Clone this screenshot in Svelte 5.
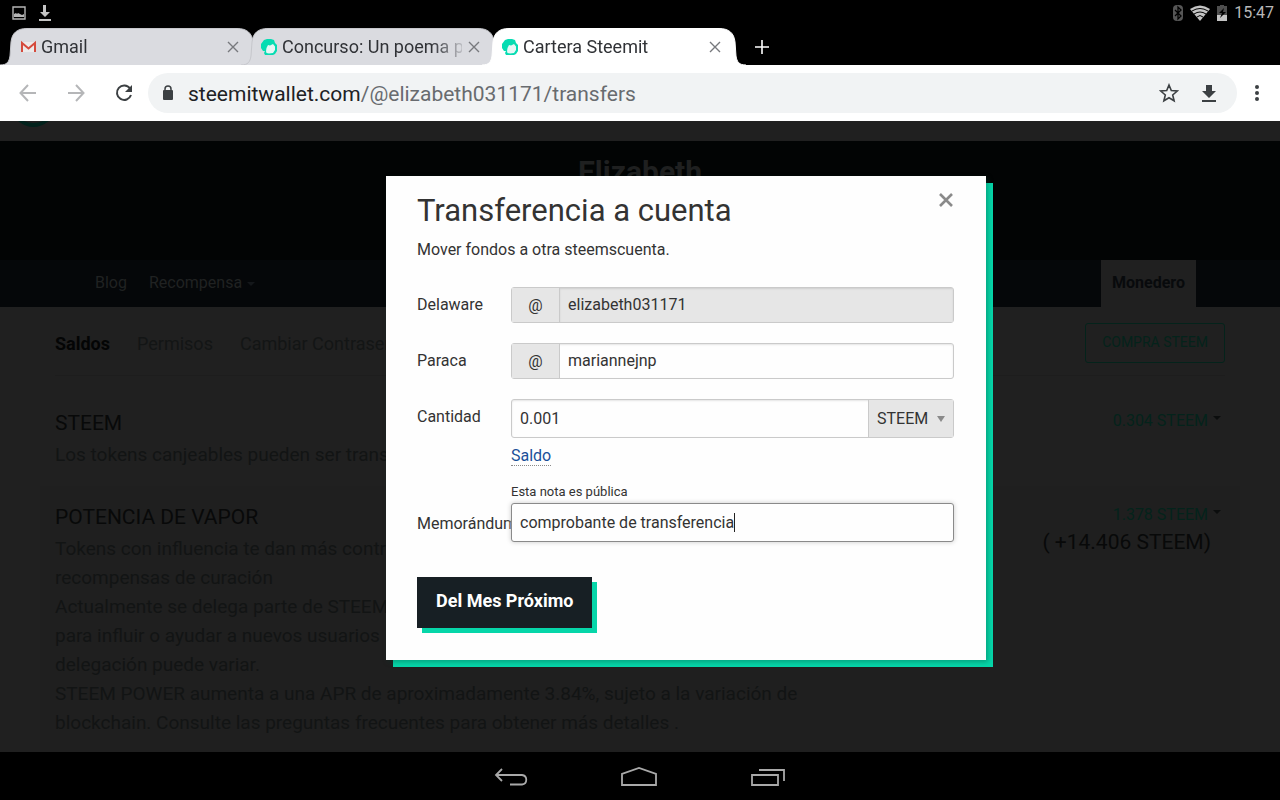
<script lang="ts">
  interface Tab {
    title: string;
    icon: 'gmail' | 'steem';
    active?: boolean;
  }

  const tabs: Tab[] = [
    { title: 'Gmail', icon: 'gmail' },
    { title: 'Concurso: Un poema p', icon: 'steem' },
    { title: 'Cartera Steemit', icon: 'steem', active: true }
  ];

  const powerLines = [
    'Tokens con influencia te dan más control',
    'recompensas de curación',
    'Actualmente se delega parte de STEEM',
    'para influir o ayudar a nuevos usuarios',
    'delegación puede variar.',
    'STEEM POWER aumenta a una APR de aproximadamente 3.84%, sujeto a la variación de',
    'blockchain. Consulte las preguntas frecuentes para obtener más detalles .'
  ];

  let from = $state('elizabeth031171');
  let to = $state('mariannejnp');
  let amount = $state('0.001');
  let asset = $state('STEEM');
  let memo = $state('comprobante de transferencia');
</script>

{#snippet cross()}
  <svg width="12" height="12" viewBox="0 0 12 12" aria-hidden="true">
    <path d="M1 1l10 10M11 1L1 11" fill="none" stroke="currentColor" stroke-width="1.4" />
  </svg>
{/snippet}

{#snippet favicon(kind: Tab['icon'])}
  {#if kind === 'gmail'}
    <svg width="16" height="16" viewBox="0 0 16 16" aria-hidden="true">
      <path d="M2 3h13v10H2z" fill="#eceaea" />
      <path d="M2 13V4l6.500 5.500L15 4v9" fill="none" stroke="#d54b3d" stroke-width="2" />
    </svg>
  {:else}
    <!-- speech bubble with a ring cut out of its lower right -->
    <svg width="16" height="16" viewBox="0 0 16 16" aria-hidden="true">
      <path d="M3 1L6 0h4l3 1 1 3 2 2v6l-2 3-2 1H4l-1-2 1-2H2L0 9V5z" fill="#06dcb2" />
      <path d="M7 6l2 .5L12 5l2 2.500v3.500L12 14l-4 .5L5.500 14 5 12l.5-3z" fill="#e6f7f5" />
    </svg>
  {/if}
{/snippet}

<div class="device">
  <div class="status-bar">
    <div class="status-group">
      <svg width="14" height="14" viewBox="0 0 14 14" aria-hidden="true">
        <path d="M1 1h12v12H1z" fill="none" stroke="#b5b5b5" stroke-width="1.4" />
        <path d="M2 11V8l2-1 1 1 1-1 2 1 2 1 2-1v3z" fill="#b5b5b5" />
      </svg>
      <svg width="14" height="18" viewBox="0 0 14 18" aria-hidden="true">
        <path d="M5 1h3v7h4l-5 5-5-5h3z" fill="#c4c4c4" />
        <path d="M1 15h12v2H1z" fill="#c4c4c4" />
      </svg>
    </div>
    <div class="status-group right">
      <svg width="12" height="18" viewBox="0 0 12 18" aria-hidden="true">
        <rect x="1" y="1" width="10" height="16" rx="4" fill="#565656" />
        <path d="M3 6l6 6-3 3V3l3 3-6 6" fill="none" stroke="#000" stroke-width="1.3" />
      </svg>
      <svg width="20" height="16" viewBox="0 0 20 16" aria-hidden="true">
        <path d="M0 4Q10-3 20 4L10 16z" fill="#c4c4c4" />
        <path d="M2 6q8-5 16 0M4 9q6-4 12 0M7 12q3-3 6 0" fill="none" stroke="#000" stroke-width="1" />
      </svg>
      <svg width="12" height="16" viewBox="0 0 12 16" aria-hidden="true">
        <path d="M4 0h4v1h3v9H1V1h3z" fill="#4e4e4e" />
        <path d="M1 10h10v6H1z" fill="#c4c4c4" />
        <path d="M8 3L3 8h3l-2 5 6-6H7z" fill="#000" />
      </svg>
      <time>15:47</time>
    </div>
  </div>

  <div class="tab-strip">
    {#each tabs as tab (tab.title)}
      <div class="tab" class:active={tab.active}>
        <svg class="tab-shape" viewBox="0 0 264 37" preserveAspectRatio="none" aria-hidden="true">
          <path d="M0 37C7 37 9 34 10 28L11 14C12 5 17 .5 27 .5H237C247 .5 252 5 253 14L254 28C255 34 257 37 264 37" />
        </svg>
        {@render favicon(tab.icon)}
        <span class="tab-title">{tab.title}</span>
        <button type="button" class="tab-close" aria-label="Cerrar {tab.title}">{@render cross()}</button>
      </div>
    {/each}
    <button type="button" class="new-tab" aria-label="Nueva pestaña">
      <svg width="14" height="14" viewBox="0 0 14 14" aria-hidden="true">
        <path d="M7 0v14M0 7h14" stroke="#fff" stroke-width="1.600" />
      </svg>
    </button>
  </div>

  <div class="toolbar">
    <button type="button" class="tool dim" aria-label="Atrás">
      <svg width="18" height="18" viewBox="0 0 18 18" aria-hidden="true">
        <path d="M17 9H2M9 1L1.500 9 9 17" fill="none" stroke="currentColor" stroke-width="2" />
      </svg>
    </button>
    <button type="button" class="tool dim" aria-label="Adelante">
      <svg width="18" height="18" viewBox="0 0 18 18" aria-hidden="true">
        <path d="M1 9h15M9 1l7.500 8L9 17" fill="none" stroke="currentColor" stroke-width="2" />
      </svg>
    </button>
    <button type="button" class="tool" aria-label="Recargar">
      <svg width="18" height="18" viewBox="0 0 18 18" aria-hidden="true">
        <path d="M15 4.500A7.200 7.200 0 1 0 16 11" fill="none" stroke="currentColor" stroke-width="2" />
        <path d="M17 1v7h-7z" fill="currentColor" />
      </svg>
    </button>
    <div class="omnibox">
      <svg width="12" height="16" viewBox="0 0 12 16" aria-hidden="true">
        <rect x="1" y="5" width="10" height="10" rx="1" fill="#3c4043" />
        <path d="M3 6V4a3 3 0 0 1 6 0v2" fill="none" stroke="#3c4043" stroke-width="1.500" />
      </svg>
      <span class="url"><b>steemitwallet.com</b>/@elizabeth031171/transfers</span>
      <button type="button" class="tool" aria-label="Añadir a marcadores">
        <svg width="20" height="20" viewBox="0 0 20 20" aria-hidden="true">
          <path d="M10 2l2.300 5.500 6 .5-4.600 4 1.400 5.800L10 14.700l-5.100 3.100L6.300 12 1.700 8l6-.5z" fill="none" stroke="currentColor" stroke-width="1.600" />
        </svg>
      </button>
      <button type="button" class="tool" aria-label="Descargar página">
        <svg width="14" height="18" viewBox="0 0 14 18" aria-hidden="true">
          <path d="M4 1h6v6h4l-7 7-7-7h4zM0 16h14v2H0z" fill="currentColor" />
        </svg>
      </button>
    </div>
    <button type="button" class="tool menu" aria-label="Más opciones">
      <svg width="4" height="16" viewBox="0 0 4 16" aria-hidden="true">
        <g fill="currentColor"><circle cx="2" cy="2" r="2" /><circle cx="2" cy="8" r="2" /><circle cx="2" cy="14" r="2" /></g>
      </svg>
    </button>
  </div>

  <div class="viewport">
    <header class="site-header">
      <svg width="40" height="8" viewBox="0 0 40 8" aria-hidden="true">
        <path d="M4 0Q19 12 35 0H29Q19 4 10 0z" fill="#02221c" />
      </svg>
    </header>
    <div class="banner"><h1>Elizabeth</h1></div>
    <nav class="profile-nav">
      <a href="#blog">Blog</a>
      <a href="#recompensa">Recompensa <i class="caret"></i></a>
      <a href="#monedero" class="current">Monedero</a>
    </nav>
    <div class="wallet">
      <div class="wallet-menu">
        <a href="#saldos" class="current">Saldos</a>
        <a href="#permisos">Permisos</a>
        <a href="#contrasena">Cambiar Contraseña</a>
        <button type="button" class="buy">COMPRA STEEM</button>
      </div>
      <section class="balance">
        <div class="balance-text">
          <h2>STEEM</h2>
          <p>Los tokens canjeables pueden ser transferidos</p>
        </div>
        <div class="balance-value"><a href="#steem">0.304 STEEM <i class="caret"></i></a></div>
      </section>
      <section class="balance shaded">
        <div class="balance-text">
          <h2>POTENCIA DE VAPOR</h2>
          {#each powerLines as line (line)}
            <p>{line}</p>
          {/each}
        </div>
        <div class="balance-value">
          <a href="#power">1.378 STEEM <i class="caret"></i></a>
          <div class="delegated">( +14.406 STEEM)</div>
        </div>
      </section>
    </div>

    <div class="overlay">
      <form class="dialog" role="dialog" aria-labelledby="transfer-title" onsubmit={(ev) => ev.preventDefault()}>
        <div class="dialog-head">
          <h3 id="transfer-title">Transferencia a cuenta</h3>
          <button type="button" class="close" aria-label="Cerrar">
            <svg width="14" height="14" viewBox="0 0 14 14" aria-hidden="true">
              <path d="M1 1l12 12M13 1L1 13" fill="none" stroke="currentColor" stroke-width="2.600" />
            </svg>
          </button>
        </div>
        <p class="lead">Mover fondos a otra steemscuenta.</p>

        <div class="row">
          <label for="from">Delaware</label>
          <div class="group">
            <span class="prefix">@</span>
            <input id="from" type="text" disabled bind:value={from} />
          </div>
        </div>
        <div class="row">
          <label for="to">Paraca</label>
          <div class="group">
            <span class="prefix">@</span>
            <input id="to" type="text" bind:value={to} />
          </div>
        </div>
        <div class="row">
          <label for="amount">Cantidad</label>
          <div>
            <div class="group tall">
              <input id="amount" type="text" bind:value={amount} />
              <div class="asset">
                <select aria-label="Moneda" bind:value={asset}>
                  <option>STEEM</option>
                  <option>SBD</option>
                </select>
                <svg width="8" height="6" viewBox="0 0 8 6" aria-hidden="true"><path d="M0 0h8L4 6z" fill="#8a8a8a" /></svg>
              </div>
            </div>
            <a class="use-balance" href="#saldo">Saldo</a>
          </div>
        </div>
        <small class="note">Esta nota es pública</small>
        <div class="row memo">
          <label for="memo">Memorándum</label>
          <div class="group tall focused">
            <input id="memo" type="text" bind:value={memo} />
            <span class="text-cursor"></span>
          </div>
        </div>
        <button type="submit" class="submit">Del Mes Próximo</button>
      </form>
    </div>
  </div>

  <div class="nav-bar">
    <button type="button" aria-label="Atrás">
      <svg width="34" height="20" viewBox="0 0 34 20" aria-hidden="true">
        <path d="M8 2L2 8l6 6M2 8h26a5 4.800 0 0 1 0 9.500H16" fill="none" stroke="#a9a9a9" stroke-width="1.800" />
      </svg>
    </button>
    <button type="button" aria-label="Inicio">
      <svg width="38" height="20" viewBox="0 0 38 20" aria-hidden="true">
        <path d="M2 18V7l17-6 17 6v11z" fill="none" stroke="#a9a9a9" stroke-width="1.800" />
      </svg>
    </button>
    <button type="button" aria-label="Recientes">
      <svg width="36" height="20" viewBox="0 0 36 20" aria-hidden="true">
        <path d="M2 8h26v10H2zM9 3h25v11" fill="none" stroke="#a9a9a9" stroke-width="1.800" />
      </svg>
    </button>
  </div>
</div>

<style>
  :global(body) {
    background: #000;
    font-family: Roboto, sans-serif;
  }

  .device {
    display: flex;
    flex-direction: column;
    height: 100vh;
    font-size: 16px;
  }

  .device * {
    box-sizing: border-box;
  }

  button {
    padding: 0;
    border: 0;
    background: none;
    font: inherit;
    cursor: pointer;
  }

  a {
    text-decoration: none;
  }

  svg {
    display: block;
    flex: none;
  }

  h1, h2, h3, p {
    margin: 0;
    font-weight: 400;
  }

  /* Android status bar */
  .status-bar {
    display: flex;
    justify-content: space-between;
    height: 28px;
    padding: 0 6px 3px 12px;
    color: #b8b8b8;
  }

  .status-group {
    display: flex;
    align-items: center;
    gap: 12px;
  }

  .status-group.right {
    gap: 6px;
  }

  /* Browser chrome */
  .tab-strip {
    display: flex;
    height: 37px;
  }

  .tab {
    position: relative;
    display: flex;
    align-items: center;
    width: 264px;
    margin-right: -23px;
    padding: 0 25px 0 20px;
    color: #303236;
    font-size: 18px;
  }

  .tab > * {
    position: relative;
  }

  .tab > .tab-shape {
    position: absolute;
    inset: 0;
    width: 100%;
    height: 100%;
  }

  .tab-shape path {
    fill: #dadbe0;
    stroke: #c6c7cc;
  }

  .tab.active .tab-shape path {
    fill: #fff;
    stroke: #fff;
  }

  .tab-title {
    flex: 1;
    min-width: 0;
    margin: 0 6px 0 5px;
    white-space: nowrap;
    mask-image: linear-gradient(to right, #000 150px, transparent 186px);
  }

  .tab-close {
    color: #77797d;
  }

  .new-tab {
    margin-left: 32px;
  }

  .toolbar {
    display: flex;
    align-items: center;
    height: 56px;
    padding: 0 11px 0 4px;
    background: #fff;
  }

  .tool {
    display: grid;
    place-items: center;
    width: 48px;
    height: 40px;
    color: #3c4043;
  }

  .tool.dim {
    color: #b5b6b8;
  }

  .tool.menu {
    width: 24px;
    margin-left: 8px;
  }

  .omnibox {
    display: flex;
    flex: 1;
    align-items: center;
    height: 40px;
    padding: 0 8px 0 14px;
    border-radius: 20px;
    background: #f1f3f4;
  }

  .omnibox .tool {
    width: 40px;
  }

  .url {
    flex: 1;
    padding: 2px 0 0 14px;
    color: #686b6f;
    font-size: 21px;
    white-space: nowrap;
  }

  .url b {
    color: #202124;
    font-weight: 400;
  }

  /* Wallet page, dimmed behind the dialog */
  .viewport {
    position: relative;
    flex: 1;
    min-height: 0;
    overflow: hidden;
    background: #202020;
  }

  .site-header {
    height: 20px;
    padding-left: 14px;
  }

  .banner {
    height: 119px;
    padding-top: 12px;
    background: #020404;
    text-align: center;
  }

  h1 {
    color: #1f2020;
    font-size: 30px;
    font-weight: 700;
    line-height: 38px;
  }

  .profile-nav {
    display: flex;
    height: 47px;
    padding: 0 84px;
    background: #050709;
    line-height: 46px;
  }

  .profile-nav a {
    padding: 0 11px;
    color: #202222;
  }

  .profile-nav .current {
    margin-left: auto;
    background: #202020;
    color: #080a0c;
    font-weight: 700;
  }

  .caret {
    display: inline-block;
    margin-left: 1px;
    border: 4px solid transparent;
    border-top-color: currentColor;
    border-bottom: 0;
    vertical-align: 2px;
  }

  .profile-nav .caret {
    color: #14171a;
  }

  .wallet {
    padding: 0 40px;
    color: #121414;
    font-size: 18px;
  }

  .wallet-menu {
    display: flex;
    gap: 27px;
    height: 69px;
    margin: 0 15px;
    border-bottom: 1px solid #1d1d1d;
    line-height: 73px;
  }

  .wallet-menu a {
    color: #131515;
    white-space: nowrap;
  }

  .wallet-menu .current {
    color: #040505;
    font-weight: 700;
  }

  .buy {
    height: 40px;
    margin: 16px 0 0 auto;
    padding: 0 16px 2px;
    border: 1px solid #04231b;
    border-radius: 3px;
    color: #04231b;
    font-size: 14px;
    line-height: 20px;
  }

  .balance {
    display: flex;
    justify-content: space-between;
    padding: 31px 15px 17px;
    line-height: 29px;
    white-space: nowrap;
  }

  .balance.shaded {
    padding-top: 15px;
    background: #1f1f1f;
  }

  .balance-text p {
    font-size: 19px;
  }

  h2 {
    color: #080909;
    font-size: 21px;
    line-height: 33px;
  }

  .balance-value {
    padding-right: 4px;
    color: #080909;
    line-height: 26px;
    text-align: right;
  }

  .balance-value a {
    color: #04231b;
    font-size: 16px;
  }

  .balance-value .caret {
    color: #0b0d0d;
    vertical-align: 6px;
  }

  .delegated {
    padding-right: 10px;
    font-size: 21px;
    line-height: 29px;
  }

  /* Transfer dialog */
  .overlay {
    position: absolute;
    inset: 0;
    display: flex;
    align-items: flex-start;
    justify-content: center;
    padding: 55px 0 0 92px;
  }

  .dialog {
    width: 600px;
    padding: 15px 32px 32px 31px;
    background: #fefefe;
    box-shadow: 2px 2px 5px rgba(0, 60, 45, 0.35), 7px 7px 0 #06d6a9;
    color: #333;
  }

  .dialog-head {
    display: flex;
    justify-content: space-between;
  }

  h3 {
    font-size: 31px;
    line-height: 40px;
  }

  .close {
    align-self: flex-start;
    margin: 2px 1px 0 0;
    color: #8a8a8a;
  }

  .lead {
    margin: 7px 0 25px;
    line-height: 24px;
  }

  .row {
    display: grid;
    grid-template-columns: 94px 1fr;
    margin-bottom: 20px;
  }

  .row label {
    line-height: 35px;
  }

  .row.memo label {
    line-height: 41px;
  }

  .row.memo {
    height: 39px;
  }

  .group {
    display: flex;
    height: 36px;
    border: 1px solid #cacaca;
    border-radius: 3px;
    background: #fefefe;
    box-shadow: inset 0 1px 2px rgba(10, 10, 10, 0.1);
  }

  .group.tall {
    height: 39px;
  }

  .prefix {
    width: 48px;
    border-right: 1px solid #cacaca;
    background: #e6e6e6;
    line-height: 35px;
    text-align: center;
  }

  input {
    flex: 1;
    min-width: 0;
    padding: 0 8px 2px;
    border: 0;
    outline: 0;
    background: transparent;
    color: #333;
    font: inherit;
  }

  .tall input {
    padding-bottom: 0;
  }

  input:disabled {
    background: #e6e6e6;
    box-shadow: inset 0 1px 2px rgba(10, 10, 10, 0.1);
  }

  .asset {
    display: grid;
    align-items: center;
    width: 85px;
    border-left: 1px solid #cacaca;
    background: #e6e6e6;
  }

  .asset > * {
    grid-area: 1 / 1;
  }

  .asset svg {
    justify-self: end;
    margin-right: 8px;
    pointer-events: none;
  }

  select {
    width: 100%;
    height: 100%;
    padding: 0 8px;
    border: 0;
    appearance: none;
    background: transparent;
    color: #333;
    font: inherit;
  }

  .use-balance {
    display: inline-block;
    margin-top: 8px;
    border-bottom: 1px dotted #8a8a8a;
    color: #1a5099;
    line-height: 19px;
  }

  .note {
    display: block;
    margin: -4px 0 1px 94px;
    font-size: 13px;
    line-height: 20px;
  }

  .group.focused {
    align-items: center;
    border-color: #8a8a8a;
    box-shadow: 0 0 5px #cacaca;
  }

  .focused input {
    flex: none;
    max-width: 100%;
    height: 100%;
    padding-right: 0;
    field-sizing: content;
  }

  .text-cursor {
    width: 1px;
    height: 19px;
    background: #222;
  }

  .submit {
    display: block;
    height: 51px;
    margin-top: 35px;
    padding: 0 19px 4px;
    background: #171f24;
    box-shadow: 5px 5px 0 #06d6a9;
    color: #fff;
    font-size: 18px;
    font-weight: 700;
  }

  /* Android navigation bar */
  .nav-bar {
    display: flex;
    align-items: center;
    justify-content: center;
    gap: 92px;
    height: 48px;
    padding-top: 2px;
  }
</style>
